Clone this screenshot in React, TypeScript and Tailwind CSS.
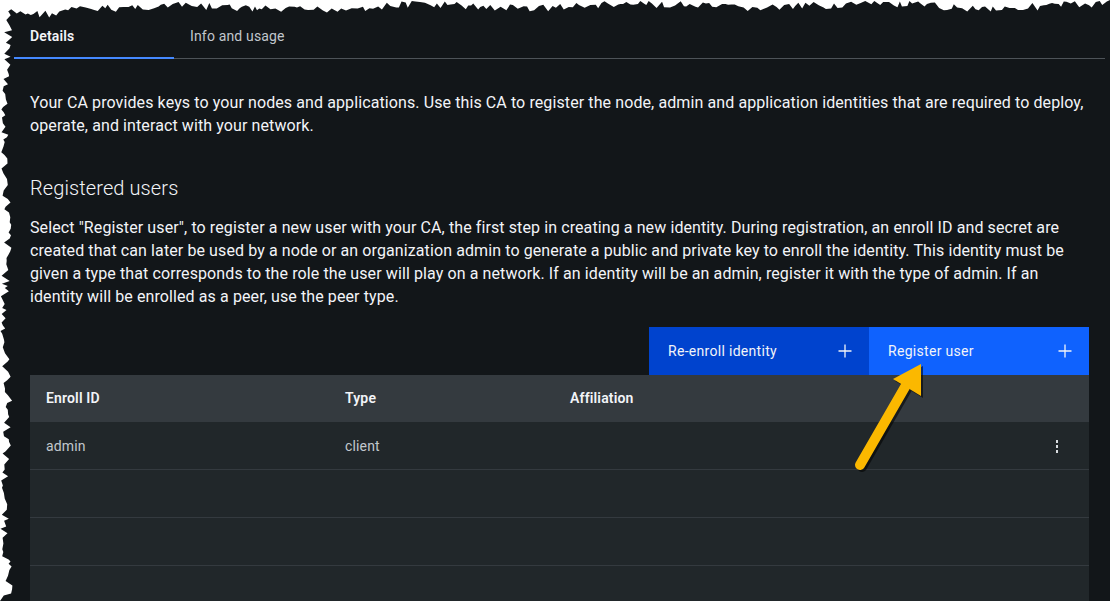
import React from "react";

const FONT = { fontFamily: "Roboto, 'Noto Sans', sans-serif" };

function rand(seed: number) {
  let s = seed;
  return () => {
    s = (s * 9301 + 49297) % 233280;
    return s / 233280;
  };
}

function TornEdges() {
  const r = rand(7);
  const pts: string[] = [];
  pts.push("0,0");
  let x = 0;
  while (x <= 1110) {
    const base = x < 60 ? 12 : x < 400 ? 8 : 6;
    const y = base + (r() - 0.5) * 8 + Math.sin(x / 37) * 2;
    pts.push(`${x},${Math.max(1, y).toFixed(1)}`);
    x += 2 + r() * 4;
  }
  pts.push("1110,0");
  const top = pts.join(" ");

  const lp: string[] = ["0,0"];
  let y = 0;
  while (y <= 601) {
    const xx = 6 + (r() - 0.5) * 9 + Math.sin(y / 29) * 2;
    lp.push(`${Math.max(0.5, xx).toFixed(1)},${y}`);
    y += 2 + r() * 4;
  }
  lp.push("0,601");
  const left = lp.join(" ");
  return (
    <svg className="absolute left-0 top-0 pointer-events-none" width="1110" height="601">
      <polygon points={top} fill="#ffffff" />
      <polygon points={left} fill="#ffffff" />
    </svg>
  );
}

function Arrow() {
  return (
    <svg className="absolute left-0 top-0 pointer-events-none" width="1110" height="601">
      <g transform="translate(2,2)" opacity="0.55">
        <line x1="860" y1="465" x2="905" y2="387" stroke="#000" strokeWidth="10" strokeLinecap="round" />
        <polygon points="921,364 893,379 921,396" fill="#000" />
      </g>
      <line x1="860" y1="465" x2="905" y2="387" stroke="#fbb800" strokeWidth="10" strokeLinecap="round" />
      <polygon points="921,364 893,379 921,396" fill="#fbb800" />
    </svg>
  );
}

function Plus() {
  return (
    <svg width="16" height="16" viewBox="0 0 16 16" fill="none">
      <path d="M8 1.5v13M1.5 8h13" stroke="currentColor" strokeWidth="1.3" />
    </svg>
  );
}

export default function App() {
  return (
    <div className="relative w-[1110px] h-[601px] overflow-hidden bg-[#121619]" style={FONT}>
      <div className="pt-[15px] pl-[14px] pr-[5px]">
        <div className="flex border-b border-[#4d5358] h-[44px]">
          <div className="w-[160px] h-[44px] pl-4 flex items-center border-b-2 border-[#4589ff] text-[14px] font-semibold tracking-[0.16px] text-[#f2f4f8]">
            Details
          </div>
          <div className="w-[160px] h-[43px] pl-4 flex items-center text-[14px] tracking-[0.16px] text-[#c1c7cd]">
            Info and usage
          </div>
        </div>
      </div>
      <div className="pl-[30px] pr-[21px]">
        <p className="mt-[32px] text-[16px] leading-[23px] tracking-[0.1px] text-[#f2f4f8] whitespace-nowrap">
          Your CA provides keys to your nodes and applications. Use this CA to register the node, admin and application identities that are required to deploy,
          <br />
          operate, and interact with your network.
        </p>
        <h2 className="mt-[37px] text-[20px] leading-[28px] font-light tracking-[0.1px] text-[#f2f4f8]">Registered users</h2>
        <p className="mt-[14px] text-[16px] leading-[23px] tracking-[0.1px] text-[#f2f4f8] whitespace-nowrap">
          Select "Register user", to register a new user with your CA, the first step in creating a new identity. During registration, an enroll ID and secret are
          <br />
          created that can later be used by a node or an organization admin to generate a public and private key to enroll the identity. This identity must be
          <br />
          given a type that corresponds to the role the user will play on a network. If an identity will be an admin, register it with the type of admin. If an
          <br />
          identity will be enrolled as a peer, use the peer type.
        </p>
        <div className="mt-[19px] flex justify-end">
          <div className="w-[220px] h-[48px] bg-[#0043ce] text-[#f2f4f8] flex items-center justify-between pl-[19px] pr-[16px] text-[14px] tracking-[0.3px]">
            <span>Re-enroll identity</span>
            <Plus />
          </div>
          <div className="w-[220px] h-[48px] bg-[#0f62fe] text-[#f2f4f8] flex items-center justify-between pl-[19px] pr-[16px] text-[14px] tracking-[0.3px]">
            <span>Register user</span>
            <Plus />
          </div>
        </div>
        <div className="text-[14px] tracking-[0.16px]">
          <div className="grid grid-cols-[299px_225px_1fr_48px] h-[47px] items-center bg-[#343a3f] text-[#f2f4f8] font-semibold">
            <div className="pl-4">Enroll ID</div>
            <div className="pl-4">Type</div>
            <div className="pl-4">Affiliation</div>
            <div />
          </div>
          <div className="grid grid-cols-[299px_225px_1fr_48px] h-[48px] items-center bg-[#21272a] border-b border-[#343a3f] text-[#c1c7cd]">
            <div className="pl-4 pt-[2px]">admin</div>
            <div className="pl-4 pt-[2px]">client</div>
            <div />
            <div className="flex flex-col items-center gap-[2.5px] pr-[16px] pt-[2px]">
              <span className="w-[2.5px] h-[2.5px] bg-[#d8dce0]" />
              <span className="w-[2.5px] h-[2.5px] bg-[#d8dce0]" />
              <span className="w-[2.5px] h-[2.5px] bg-[#d8dce0]" />
            </div>
          </div>
          <div className="h-[48px] bg-[#21272a] border-b border-[#343a3f]" />
          <div className="h-[48px] bg-[#21272a] border-b border-[#343a3f]" />
          <div className="h-[48px] bg-[#21272a] border-b border-[#343a3f]" />
        </div>
      </div>
      <Arrow />
      <TornEdges />
    </div>
  );
}
